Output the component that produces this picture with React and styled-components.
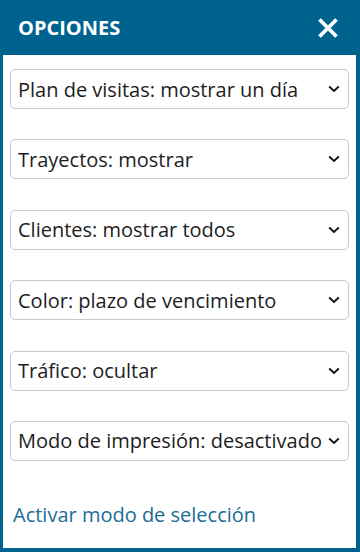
import React from "react";
import styled, { createGlobalStyle } from "styled-components";

const Global = createGlobalStyle`
  html, body { margin: 0; padding: 0; background: #fff; }
  body { font-family: "Open Sans", "Noto Sans", sans-serif; }
  * { box-sizing: border-box; }
`;

const Panel = styled.div`
  width: 360px;
  height: 552px;
  display: flex;
  flex-direction: column;
  background: #00628f;
  padding: 0 4px 4px 3px;
`;

const Header = styled.div`
  height: 55px;
  display: flex;
  align-items: center;
  justify-content: space-between;
  padding: 0 16px 0 15px;
  color: #fff;
`;

const Title = styled.h1`
  margin: 0;
  font-size: 20px;
  font-weight: 700;
  letter-spacing: 0;
`;

const CloseButton = styled.button`
  border: 0;
  background: none;
  padding: 0;
  width: 24px;
  height: 24px;
  display: flex;
  align-items: center;
  justify-content: center;
  cursor: pointer;
`;

const Body = styled.div`
  flex: 1;
  background: #fff;
  display: flex;
  flex-direction: column;
  padding: 14px 7px 0 7px;
`;

const List = styled.div`
  display: flex;
  flex-direction: column;
  gap: 30.4px;
`;

const SelectWrap = styled.div`
  position: relative;
  height: 40px;
`;

const Select = styled.select`
  appearance: none;
  -webkit-appearance: none;
  width: 100%;
  height: 100%;
  border: 1px solid #c8c8c8;
  border-radius: 5px;
  background: #fff;
  font-family: "Open Sans", "Noto Sans", sans-serif;
  font-size: 20px;
  color: #1d1d1d;
  padding: 0 18px 0 7px;
  outline: none;
`;

const Chevron = styled.svg`
  position: absolute;
  right: 9px;
  top: 50%;
  transform: translateY(-50%);
  pointer-events: none;
`;

const Link = styled.a`
  margin-top: 40px;
  padding-left: 3px;
  font-size: 20px;
  color: #1a6d97;
  text-decoration: none;
  cursor: pointer;
`;

const options = [
  "Plan de visitas: mostrar un día",
  "Trayectos: mostrar",
  "Clientes: mostrar todos",
  "Color: plazo de vencimiento",
  "Tráfico: ocultar",
  "Modo de impresión: desactivado",
];

export default function App() {
  return (
    <>
      <Global />
      <Panel>
        <Header>
          <Title>OPCIONES</Title>
          <CloseButton aria-label="Cerrar">
            <svg width="22" height="22" viewBox="0 0 22 22">
              <path d="M2.5 2.5 L19.5 19.5 M19.5 2.5 L2.5 19.5" stroke="#fff" strokeWidth="3.8" strokeLinecap="butt" />
            </svg>
          </CloseButton>
        </Header>
        <Body>
          <List>
            {options.map((o) => (
              <SelectWrap key={o}>
                <Select defaultValue={o}>
                  <option>{o}</option>
                </Select>
                <Chevron width="12" height="8" viewBox="0 0 12 8">
                  <path d="M1.2 1.5 L6 6 L10.8 1.5" fill="none" stroke="#111" strokeWidth="1.9" />
                </Chevron>
              </SelectWrap>
            ))}
          </List>
          <Link>Activar modo de selección</Link>
        </Body>
      </Panel>
    </>
  );
}
